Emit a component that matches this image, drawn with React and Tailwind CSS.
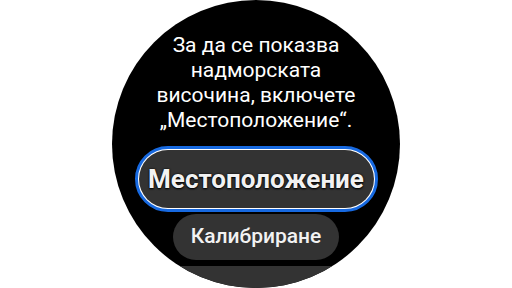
import React from "react";

const App = () => {
  return (
    <div className="w-[512px] h-[288px] bg-white flex items-center justify-center overflow-hidden">
      {/* WATCH FACE */}
      <div
        className="w-[288px] h-[288px] rounded-full bg-black overflow-hidden flex flex-col items-center pt-[33px]"
        style={{ fontFamily: "Roboto, 'Noto Sans', sans-serif" }}
      >
        <p className="text-white text-[21px] leading-[25px] text-center">
          За да се показва
          <br />
          надморската
          <br />
          височина, включете
          <br />
          „Местоположение“.
        </p>

        {/* PRIMARY (focused) */}
        <div className="mt-[13px] w-[243px] h-[66px] shrink-0 rounded-full border-[3px] border-[#1769e0] bg-white p-[1px]">
          <div className="w-full h-full rounded-full bg-[#333333] flex items-center justify-center">
            <span className="text-[#f2f2f2] text-[26px] font-bold [text-shadow:0_0_2px_#000,0_1px_2px_#000]">
              Местоположение
            </span>
          </div>
        </div>

        <div className="mt-[2px] w-[166px] h-[46px] shrink-0 rounded-full bg-[#333333] flex items-center justify-center">
          <span className="text-[#f2f2f2] text-[21px] font-medium">Калибриране</span>
        </div>

        <div className="mt-[6px] w-[200px] h-[46px] shrink-0 rounded-full bg-[#333333]" />
      </div>
    </div>
  );
};

export default App;
